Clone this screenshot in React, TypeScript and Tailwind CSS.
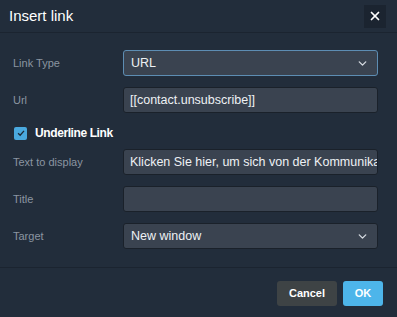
import React from 'react';
import { ChevronDown, X } from 'lucide-react';

const font = { fontFamily: '"Liberation Sans", Arial, sans-serif' };

function Row({ label, children }: { label: string; children: React.ReactNode }) {
  return (
    <div className="flex items-center h-[26px]">
      <label className="w-[123px] shrink-0 pl-[13px] text-[11px] text-[#8b95a1] whitespace-nowrap">{label}</label>
      <div className="flex-1 min-w-0">{children}</div>
    </div>
  );
}

function Field({ value, focused }: { value?: string; focused?: boolean }) {
  return (
    <div
      className={
        'h-[26px] rounded-[3px] bg-[#3a4350] border flex items-center px-[6px] overflow-hidden whitespace-nowrap text-[12.5px] text-[#eef1f4] ' +
        (focused ? 'border-[#5d8db3]' : 'border-[#1a212a]')
      }
    >
      {value}
    </div>
  );
}

function Select({ value, focused }: { value: string; focused?: boolean }) {
  return (
    <div
      className={
        'h-[26px] rounded-[3px] bg-[#3a4350] border flex items-center justify-between pl-[7px] pr-[8px] text-[12.5px] text-[#eef1f4] ' +
        (focused ? 'border-[#5d8db3]' : 'border-[#1a212a]')
      }
    >
      <span>{value}</span>
      <ChevronDown size={13} strokeWidth={2.5} className="text-[#d5dae0]" />
    </div>
  );
}

export default function App() {
  return (
    <div className="w-[397px] h-[317px] bg-[#222d3b] flex flex-col overflow-hidden" style={font}>
      <header className="h-[33px] flex items-center justify-between pl-[9px] pr-[11px] border-b border-[#1b2430]">
        <h1 className="text-[15px] text-white">Insert link</h1>
        <button className="w-[22px] h-[23px] bg-[#1b2430] flex items-center justify-center text-white">
          <X size={14} strokeWidth={3} />
        </button>
      </header>

      <div className="flex-1 flex flex-col pr-[19px] pt-[17px] gap-[11px]">
        <Row label="Link Type">
          <Select value="URL" focused />
        </Row>
        <Row label="Url">
          <Field value="[[contact.unsubscribe]]" />
        </Row>
        <div className="flex items-center h-[14px] pl-[14px] gap-[8px] mt-[2px] mb-[-2px]">
          <span className="w-[13px] h-[13px] rounded-[2px] bg-[#4aa9df] flex items-center justify-center">
            <svg viewBox="0 0 12 12" className="w-[10px] h-[10px]">
              <path d="M2.5 6.2 L5 8.6 L9.6 3.4" fill="none" stroke="#1d2a38" strokeWidth="1.6" />
            </svg>
          </span>
          <span className="text-[12px] text-white font-bold tracking-[-0.4px]">Underline Link</span>
        </div>
        <Row label="Text to display">
          <Field value="Klicken Sie hier, um sich von der Kommunikation abzumelden" />
        </Row>
        <Row label="Title">
          <Field />
        </Row>
        <Row label="Target">
          <Select value="New window" />
        </Row>
      </div>

      <footer className="h-[50px] border-t border-[#1b2430] flex items-start justify-end gap-[6px] pt-[13px] pr-[14px]">
        <button className="w-[60px] h-[25px] rounded-[3px] bg-[#3e4345] text-[11px] font-bold text-white">Cancel</button>
        <button className="w-[40px] h-[25px] rounded-[3px] bg-[#4db5ea] text-[11px] font-bold text-white">OK</button>
      </footer>
    </div>
  );
}
